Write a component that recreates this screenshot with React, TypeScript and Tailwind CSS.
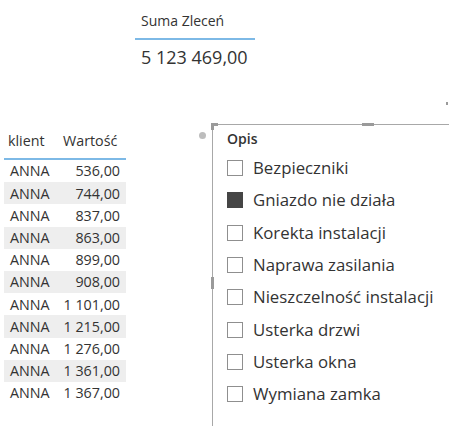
import React from "react";

const rows = [
  "536,00",
  "744,00",
  "837,00",
  "863,00",
  "899,00",
  "908,00",
  "1 101,00",
  "1 215,00",
  "1 276,00",
  "1 361,00",
  "1 367,00",
];

const items = [
  { label: "Bezpieczniki", checked: false },
  { label: "Gniazdo nie działa", checked: true },
  { label: "Korekta instalacji", checked: false },
  { label: "Naprawa zasilania", checked: false },
  { label: "Nieszczelność instalacji", checked: false },
  { label: "Usterka drzwi", checked: false },
  { label: "Usterka okna", checked: false },
  { label: "Wymiana zamka", checked: false },
];

export default function App() {
  return (
    <div
      className="relative w-[449px] h-[426px] overflow-hidden bg-white text-[#333333]"
      style={{ fontFamily: '"Open Sans", "Noto Sans", sans-serif' }}
    >
      {/* Card */}
      <div className="ml-[135px] w-[120px] pt-[11px]">
        <div className="border-b-2 border-b-[#7db9e6] pl-[6px] pb-[7px] text-[14px] leading-[20px]">
          Suma Zleceń
        </div>
        <div className="pl-[6px] pt-[4px] text-[18px] leading-[26px]">5 123 469,00</div>
      </div>

      {/* tiny mark top right */}
      <div className="absolute left-[446px] top-[102px] h-[3px] w-[2px] bg-[#9a9a9a]" />

      <div className="mt-[54px] flex items-start">
        {/* Table */}
        <div className="ml-[4px] mt-[3px] w-[122px] text-[14.3px]">
          <div className="flex h-[33px] border-b-2 border-b-[#7db9e6] pt-[4px] leading-[20px]">
            <div className="pl-[4px] w-[56px]">klient</div>
            <div className="pl-[3px]">Wartość</div>
          </div>
          {rows.map((v, i) => (
            <div
              key={i}
              className={
                "flex h-[22.2px] items-center " + (i % 2 === 1 ? "bg-[#eeeeee]" : "")
              }
            >
              <div className="pl-[6px] w-[56px]">ANNA</div>
              <div className="flex-1 pr-[6px] text-right">{v}</div>
            </div>
          ))}
        </div>

        {/* Slicer */}
        <div className="relative ml-[86px] h-[330px] flex-1 border-l border-t border-[#a8a8a8]">
          {/* selection handles */}
          <div className="absolute -left-[2px] -top-[2px] h-[3px] w-[7px] bg-[#9a9a9a]" />
          <div className="absolute -left-[2px] -top-[2px] h-[7px] w-[3px] bg-[#9a9a9a]" />
          <div className="absolute left-[149px] -top-[2px] h-[3px] w-[12px] bg-[#9a9a9a]" />
          <div className="absolute -left-[2px] top-[152px] h-[12px] w-[3px] bg-[#9a9a9a]" />
          <div className="absolute -left-[14px] top-[7px] h-[7px] w-[7px] rounded-full bg-[#bdbdbd]" />

          <div className="pl-[14px] pt-[4px]">
            <div className="text-[14px] font-semibold leading-[20px]">Opis</div>
            <div className="mt-[3px]">
              {items.map((it) => (
                <div key={it.label} className="flex h-[32.3px] items-center">
                  <div
                    className={
                      "h-[16px] w-[16px] border " +
                      (it.checked ? "border-[#454545] bg-[#454545]" : "border-[#8f8f8f] bg-white")
                    }
                  />
                  <div className="ml-[10px] whitespace-nowrap text-[16.8px] leading-[22px]">
                    {it.label}
                  </div>
                </div>
              ))}
            </div>
          </div>
        </div>
      </div>
    </div>
  );
}
